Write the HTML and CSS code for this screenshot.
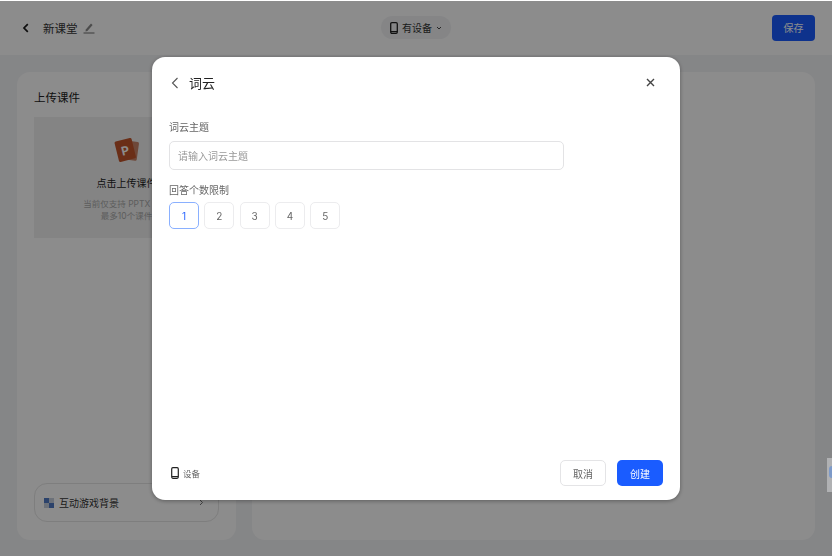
FILE: index.html
```html
<!DOCTYPE html>
<html lang="zh-CN">
<head>
<meta charset="utf-8">
<title>新课堂</title>
<link rel="stylesheet" href="styles.css">
</head>
<body>
<div class="page">
  <header class="topbar">
    <div class="top-left">
      <svg class="back-icon" width="8" height="10" viewBox="0 0 8 10"><path d="M5.8 1.2 2 5l3.8 3.8" fill="none" stroke="#1a1a1a" stroke-width="1.7"/></svg>
      <span class="course-name">新课堂</span>
      <svg class="edit-icon" width="12" height="12" viewBox="0 0 12 12"><path d="M2.8 7.6 8 1.6 9.6 2.9 4.4 8.9 2.5 9.4Z" fill="#8a8a8a"/><path d="M0.5 11h11" stroke="#777" stroke-width="1.1"/></svg>
    </div>
    <div class="device-pill">
      <svg width="8" height="12" viewBox="0 0 8 12"><rect x=".7" y=".7" width="6.6" height="10.6" rx="1.2" fill="none" stroke="#222" stroke-width="1.3"/><path d="M1 9.6h6" stroke="#222" stroke-width="1.2"/></svg>
      <span>有设备</span>
      <svg width="6" height="4" viewBox="0 0 6 4"><path d="M1 1l2 2 2-2" fill="none" stroke="#444" stroke-width="1"/></svg>
    </div>
    <button class="save-btn">保存</button>
  </header>
  <main class="workspace">
    <section class="card side-card">
      <h2 class="card-title">上传课件</h2>
      <div class="upload-box">
        <svg class="ppt-icon" width="26" height="26" viewBox="0 0 26 26">
          <rect x="8" y="4" width="16" height="19" rx="1.5" transform="rotate(8 16 13)" fill="#c98468"/>
          <g transform="rotate(-14 11 13)">
            <rect x="2.5" y="2.5" width="17.5" height="21" rx="1.5" fill="#c2552b"/>
            <text x="11.2" y="18" class="ppt-letter">P</text>
          </g>
        </svg>
        <div class="upload-title">点击上传课件</div>
        <div class="upload-note">当前仅支持 PPTX 格式<br>最多10个课件</div>
      </div>
      <div class="game-bg">
        <svg width="10" height="10" viewBox="0 0 10 10"><rect width="10" height="10" fill="#4f79c4"/><rect x="5" width="5" height="5" fill="#c5cedd"/><rect y="5" width="5" height="5" fill="#c5cedd"/></svg>
        <span class="game-label">互动游戏背景</span>
        <svg class="game-arrow" width="5" height="7" viewBox="0 0 5 7"><path d="M1 1l2.5 2.5L1 6" fill="none" stroke="#666" stroke-width=".9"/></svg>
      </div>
    </section>
    <section class="card main-card"></section>
  </main>
</div>
<div class="backdrop"></div>
<div class="edge-widget"><span class="edge-dot"></span></div>
<div class="modal">
  <div class="modal-head">
    <svg width="8" height="12" viewBox="0 0 8 12"><path d="M6.5 1 1.5 6l5 5" fill="none" stroke="#555" stroke-width="1.1"/></svg>
    <h1 class="modal-title">词云</h1>
    <svg class="close-icon" width="9" height="9" viewBox="0 0 9 9"><path d="M1 1l7 7M8 1 1 8" stroke="#444" stroke-width="1.4"/></svg>
  </div>
  <label class="field-label topic-label" for="topic">词云主题</label>
  <input id="topic" class="topic-input" placeholder="请输入词云主题">
  <div class="field-label limit-label">回答个数限制</div>
  <div class="limit-row">
    <button class="limit active">1</button>
    <button class="limit">2</button>
    <button class="limit">3</button>
    <button class="limit">4</button>
    <button class="limit">5</button>
  </div>
  <div class="modal-foot">
    <div class="foot-device">
      <svg width="8" height="12" viewBox="0 0 8 12"><rect x=".7" y=".7" width="6.6" height="10.6" rx="1.2" fill="none" stroke="#222" stroke-width="1.2"/><path d="M1 9.6h6" stroke="#222" stroke-width="1.2"/></svg>
      <span>设备</span>
    </div>
    <button class="btn-cancel">取消</button>
    <button class="btn-create">创建</button>
  </div>
</div>
</body>
</html>
```
FILE: styles.css
```css
* { box-sizing: border-box; }
html, body { margin: 0; height: 100%; overflow: hidden; }
body {
  background: #f3f4f6;
  font-family: "Inter", "Noto Sans CJK SC", sans-serif;
  color: #222;
}
button { font-family: inherit; cursor: pointer; }
.page { height: 556px; display: flex; flex-direction: column; }
.topbar {
  height: 55px;
  flex: none;
  background: #fff;
  display: grid;
  grid-template-columns: 1fr auto 1fr;
  align-items: center;
  padding: 0 17px;
}
.top-left { display: flex; align-items: center; }
.back-icon { margin: 0 13px 0 5px; }
.course-name { font-size: 11.5px; color: #333; }
.edit-icon { margin-left: 5px; }
.device-pill {
  width: 70px;
  height: 23px;
  border-radius: 12px;
  background: #f2f3f5;
  display: flex;
  align-items: center;
  justify-content: center;
  gap: 4px;
  font-size: 10px;
  color: #333;
}
.save-btn {
  justify-self: end;
  width: 43px;
  height: 26px;
  border: 0;
  border-radius: 4px;
  background: #1a5cff;
  color: #fff;
  font-size: 10px;
}
.workspace {
  flex: 1;
  display: flex;
  gap: 16px;
  padding: 17px 17px 16px;
  min-height: 0;
}
.card { background: #fff; border-radius: 13px; }
.side-card {
  width: 219px;
  padding: 18px 17px 18px;
  display: flex;
  flex-direction: column;
}
.main-card { flex: 1; }
.card-title { margin: 0 0 11px; font-size: 11.5px; font-weight: 400; line-height: 16px; color: #222; }
.upload-box {
  height: 121px;
  background: #f0f0f1;
  display: flex;
  flex-direction: column;
  align-items: center;
  padding-top: 20px;
}
.ppt-icon { margin-bottom: 13px; }
.ppt-letter { font-size: 12px; font-weight: 700; fill: #fff; text-anchor: middle; font-family: "Inter", sans-serif; }
.upload-title { font-size: 10px; line-height: 14px; color: #222; margin-bottom: 8px; }
.upload-note { font-size: 8.5px; line-height: 12px; color: #aaa; text-align: center; white-space: nowrap; }
.game-bg {
  margin-top: auto;
  height: 39px;
  border: 1px solid #e6e6e6;
  border-radius: 13px;
  display: flex;
  align-items: center;
  padding: 0 14px 0 9px;
  gap: 5px;
}
.game-label { font-size: 10px; color: #333; }
.game-arrow { margin-left: auto; }
.backdrop { position: fixed; inset: 1px 0 0; background: rgba(0, 0, 0, .45); }
.edge-widget {
  position: fixed;
  left: 827px;
  top: 458px;
  width: 5px;
  height: 34px;
  background: #b0b1b3;
  padding: 8px 0 0 2px;
}
.edge-dot { display: block; width: 3px; height: 12px; background: #7d9ac8; border-radius: 3px 0 0 3px; }
.modal {
  position: fixed;
  left: 152px;
  top: 57px;
  width: 528px;
  height: 443px;
  background: #fff;
  border-radius: 13px;
  box-shadow: 0 1px 4px rgba(0, 0, 0, .35);
  padding: 0 17px;
  display: flex;
  flex-direction: column;
}
.modal-head { height: 51px; display: flex; align-items: center; flex: none; }
.modal-head svg:first-child { margin-right: 10px; margin-left: 2px; }
.modal-title { margin: 0; font-size: 13px; font-weight: 400; color: #222; }
.close-icon { margin-left: auto; margin-right: 8px; }
.field-label { display: block; font-size: 10px; line-height: 14px; color: #666; }
.topic-label { margin: 12px 0 7px; }
.topic-input {
  width: 395px;
  height: 29px;
  flex: none;
  border: 1px solid #e3e3e5;
  border-radius: 5px;
  padding: 0 8px;
  font-family: inherit;
  font-size: 10px;
  outline: none;
}
.topic-input::placeholder { color: #999; }
.limit-label { margin: 13px 0 5px; }
.limit-row { display: flex; gap: 5.3px; }
.limit {
  width: 30px;
  height: 27px;
  border: 1px solid #ececee;
  border-radius: 5px;
  background: #fff;
  padding: 0;
  font-size: 10px;
  color: #666;
}
.limit.active { border-color: #8ab0ff; color: #2a66ff; }
.modal-foot {
  margin-top: auto;
  height: 40px;
  padding-bottom: 14px;
  display: flex;
  align-items: center;
}
.foot-device { display: flex; align-items: center; gap: 4px; margin: 0 auto 1px 2px; font-size: 8.5px; color: #666; }
.btn-cancel, .btn-create { height: 26px; width: 46px; border-radius: 5px; font-size: 10px; }
.btn-cancel { background: #fff; border: 1px solid #e4e4e6; color: #666; }
.btn-create { background: #1a5cff; border: 0; color: #fff; margin-left: 11px; }
```
